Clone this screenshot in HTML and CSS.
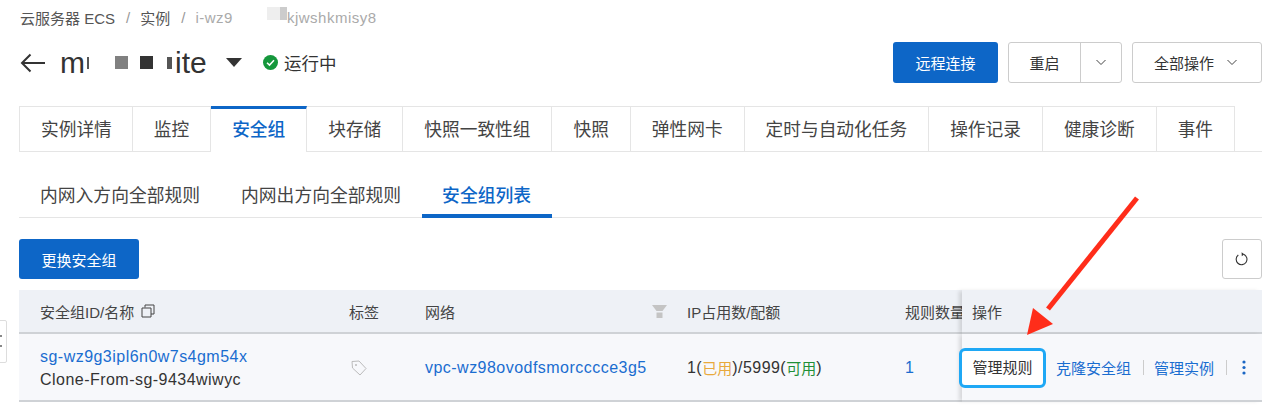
FILE: index.html
```html
<!DOCTYPE html>
<html lang="zh-CN">
<head>
    <meta charset="UTF-8">
    <title>安全组</title>
    <link rel="stylesheet" href="styles.css">
</head>
<body>
<div class="page">
    <div class="crumbs">
        <span>云服务器 ECS</span>
        <span class="crumb_sep">/</span>
        <span>实例</span>
        <span class="crumb_sep">/</span>
        <span class="crumb_last">i-wz9</span>
        <span class="crumb_blur"><i></i><i class="crumb_square"></i></span>
        <span class="crumb_last">kjwshkmisy8</span>
    </div>

    <div class="head">
        <svg class="back" width="26" height="20" viewBox="0 0 26 20"><path d="M25 10H2M10.500 1.500 2 10l8.500 8.500" fill="none" stroke="#333" stroke-width="2"/></svg>
        <div class="name">
            <span>m</span>
            <i class="name_sliver"></i>
            <i class="name_square name_gray"></i>
            <i class="name_square name_dark"></i>
            <i class="name_sliver name_sliver2"></i>
            <span class="name_tail">ite</span>
        </div>
        <svg class="caret" width="16" height="9" viewBox="0 0 16 9"><path d="M0 0h16L8 9z" fill="#333"/></svg>
        <svg class="ok" width="15" height="15" viewBox="0 0 15 15"><circle cx="7.500" cy="7.500" r="7.500" fill="#15973c"/><path d="M4 7.700l2.500 2.400L11 5.300" fill="none" stroke="#fff" stroke-width="1.500"/></svg>
        <span class="state">运行中</span>
        <div class="head_btns">
            <a class="btn btn_main">远程连接</a>
            <div class="btn_group">
                <a class="btn_part btn_restart">重启</a>
                <a class="btn_part btn_more"><svg width="12" height="7" viewBox="0 0 12 7"><path d="M1.500 1 6 5.500 10.500 1" fill="none" stroke="#444" stroke-width="1"/></svg></a>
            </div>
            <a class="btn btn_all">全部操作 <svg width="12" height="7" viewBox="0 0 12 7"><path d="M1.500 1 6 5.500 10.500 1" fill="none" stroke="#444" stroke-width="1"/></svg></a>
        </div>
    </div>

    <div class="tabs">
        <a class="tab">实例详情</a>
        <a class="tab">监控</a>
        <a class="tab tab_active">安全组</a>
        <a class="tab">块存储</a>
        <a class="tab">快照一致性组</a>
        <a class="tab">快照</a>
        <a class="tab">弹性网卡</a>
        <a class="tab">定时与自动化任务</a>
        <a class="tab">操作记录</a>
        <a class="tab">健康诊断</a>
        <a class="tab">事件</a>
    </div>

    <div class="subtabs">
        <a class="subtab">内网入方向全部规则</a>
        <a class="subtab">内网出方向全部规则</a>
        <a class="subtab subtab_active">安全组列表</a>
    </div>

    <div class="tools">
        <a class="btn btn_change">更换安全组</a>
        <a class="btn_refresh"><svg width="14" height="14" viewBox="0 0 14 14"><path d="M8.600 2.300A5.400 5.400 0 1 1 3.300 3" fill="none" stroke="#333" stroke-width="1.100"/><path d="M6.600 .3 9.200 2.300 6.800 4.300z" fill="#333"/></svg></a>
    </div>

    <div class="table">
        <div class="cell th c_first">安全组ID/名称
            <svg class="copy" width="14" height="14" viewBox="0 0 14 14"><path d="M4 3.500V1h9v9h-3M1 4h9v9H1z" fill="none" stroke="#444" stroke-width="1"/></svg>
        </div>
        <div class="cell th">标签</div>
        <div class="cell th c_net">网络
            <svg width="15" height="13" viewBox="0 0 15 13"><path d="M0 0h15l-4.500 6H4.500z" fill="#c4c4c4"/><path d="M4.500 7.500h6V13h-6z" fill="#c4c4c4"/></svg>
        </div>
        <div class="cell th">IP占用数/配额</div>
        <div class="cell th c_clip">规则数量</div>
        <div class="cell th c_ops">操作</div>

        <div class="cell td c_first c_two">
            <a class="link">sg-wz9g3ipl6n0w7s4gm54x</a>
            <span>Clone-From-sg-9434wiwyc</span>
        </div>
        <div class="cell td">
            <svg class="tag" width="16" height="16" viewBox="0 0 16 16"><path d="M1 1.500 8 1l7 7.500-6 6.500-7.500-7z" fill="none" stroke="#bbb" stroke-width="1"/><circle cx="5" cy="5" r="1" fill="#bbb"/></svg>
        </div>
        <div class="cell td"><a class="link">vpc-wz98ovodfsmorcccce3g5</a></div>
        <div class="cell td">1(<span class="used">已用</span>)/5999(<span class="free">可用</span>)</div>
        <div class="cell td"><a class="link">1</a></div>
        <div class="cell td c_ops c_actions">
            <a class="mark">管理规则</a>
            <a class="link">克隆安全组</a>
            <i class="sep"></i>
            <a class="link">管理实例</a>
            <i class="sep"></i>
            <svg class="dots" width="4" height="15" viewBox="0 0 4 15"><circle cx="2" cy="2" r="1.600" fill="#1a66c4"/><circle cx="2" cy="7.500" r="1.600" fill="#1a66c4"/><circle cx="2" cy="13" r="1.600" fill="#1a66c4"/></svg>
        </div>
    </div>
</div>

<!-- overlays -->
<div class="handle"></div>
<svg class="pointer" width="130" height="150" viewBox="0 0 130 150">
    <path d="M118 3 29 114" stroke="#ff2d1a" stroke-width="5" fill="none"/>
    <path d="M8 140 14 113 34 129z" fill="#ff2d1a"/>
</svg>
</body>
</html>
```

FILE: styles.css
```css
* {
    box-sizing: border-box;
    margin: 0;
    padding: 0;
}
body {
    background: #fff;
    color: #333;
    font-family: 'Liberation Sans', 'Noto Sans CJK SC', sans-serif;
    overflow: hidden;
    position: relative;
    height: 416px;
}
a {
    cursor: pointer;
}
.page {
    padding: 7px 18px 0 19px;
}

.crumbs {
    display: flex;
    align-items: center;
    height: 20px;
    padding-left: 1px;
    font-size: 15px;
    color: #555;
}
.crumb_sep {
    margin: 0 10px 0 11px;
    color: #999;
}
.crumb_last {
    color: #aaa;
    letter-spacing: .5px;
}
.crumb_blur {
    width: 54px;
    height: 20px;
    display: flex;
    justify-content: flex-end;
    align-items: flex-start;
}
.crumb_blur i {
    width: 13px;
    height: 13px;
    background: #eee;
}
.crumb_blur .crumb_square {
    width: 7px;
    background: #ccc;
}

.head {
    display: flex;
    align-items: center;
    height: 41px;
    margin-top: 15px;
}
.back {
    margin-left: 1px;
    margin-right: 14px;
}
.name {
    display: flex;
    align-items: center;
    width: 149px;
    font-size: 30px;
    line-height: 41px;
    color: #333;
}
.name_sliver {
    width: 2px;
    height: 12px;
    margin-left: 2px;
    background: #555;
}
.name_sliver2 {
    width: 5px;
    margin-left: 14px;
}
.name_tail {
    margin-left: 3px;
}
.name_square {
    width: 13px;
    height: 13px;
}
.name_gray {
    margin-left: 26px;
    background: #808080;
}
.name_dark {
    margin-left: 12px;
    background: #333;
}
.caret {
    margin-left: 17px;
}
.ok {
    margin-left: 21px;
}
.state {
    margin-left: 6px;
    font-size: 17.500px;
}
.head_btns {
    display: flex;
    gap: 10px;
    margin-left: auto;
}
.btn {
    display: flex;
    align-items: center;
    justify-content: center;
    height: 41px;
    font-size: 15px;
    border-radius: 3px;
}
.btn_main {
    width: 105px;
    background: #0d66c7;
    color: #fff;
}
.btn_group {
    display: flex;
    width: 114px;
    height: 41px;
    border: 1px solid #ccc;
    border-radius: 3px;
}
.btn_part {
    display: flex;
    align-items: center;
    justify-content: center;
    font-size: 15px;
}
.btn_restart {
    width: 72px;
    border-right: 1px solid #ccc;
}
.btn_more {
    flex: 1;
}
.btn_all {
    gap: 12px;
    width: 130px;
    padding-right: 2px;
    border: 1px solid #ccc;
}

.tabs {
    display: flex;
    height: 46px;
    margin-top: 23px;
    border-bottom: 1px solid #e5e5e5;
}
.tab {
    display: flex;
    align-items: center;
    justify-content: center;
    height: 46px;
    padding: 0 21px 2px;
    font-size: 17.700px;
    background: #fff;
    border: 1px solid #e5e5e5;
    border-left: 0;
    color: #444;
}
.tab:first-child {
    border-left: 1px solid #e5e5e5;
    padding-right: 20px;
}
.tab_active {
    border-top: 3px solid #0d66c7;
    border-bottom: 0;
    padding-bottom: 5px;
    color: #0d66c7;
    font-weight: 500;
}

.subtabs {
    display: flex;
    height: 44px;
    margin-top: 22px;
    padding-left: .5px;
    border-bottom: 1px solid #e5e5e5;
}
.subtab {
    height: 44px;
    padding: 0 20.500px;
    line-height: 44px;
    font-size: 17.800px;
    color: #444;
}
.subtab_active {
    color: #0d66c7;
    font-weight: 500;
    border-bottom: 4px solid #0d66c7;
}

.tools {
    display: flex;
    justify-content: space-between;
    margin-top: 21px;
}
.btn_change {
    width: 120px;
    height: 40px;
    background: #0d66c7;
    color: #fff;
}
.btn_refresh {
    display: flex;
    align-items: center;
    justify-content: center;
    width: 40px;
    height: 40px;
    border: 1px solid #ccc;
    border-radius: 3px;
}

.table {
    display: grid;
    grid-template-columns: 310px 76px 262px 218px 77px 300px;
    grid-template-rows: 44px 68px;
    margin-top: 11px;
    font-size: 15px;
}
.cell {
    display: flex;
    align-items: center;
    padding-left: 20px;
    border-bottom: 2px solid #cfd2d6;
    white-space: nowrap;
}
.th {
    background: #eef1f6;
    color: #444;
}
.td {
    padding-top: 1px;
    background: #f7f8fb;
    font-size: 16px;
    letter-spacing: .47px;
}
.c_first {
    padding-left: 21px;
}
.copy {
    margin-left: 7px;
}
.tag {
    margin-left: 2px;
}
.c_net {
    justify-content: space-between;
}
.c_clip {
    overflow: hidden;
    padding-right: 0;
}
.c_ops {
    padding-left: 10px;
    box-shadow: -4px 0 4px -1px rgba(0, 0, 0, .13);
    position: relative;
}
.c_two {
    flex-direction: column;
    align-items: flex-start;
    justify-content: center;
    gap: 4px;
    line-height: 19px;
}
.link {
    color: #1a6dd0;
}
.used,
.free {
    font-size: 15px;
    letter-spacing: 0;
}
.used {
    color: #e8a93c;
}
.free {
    color: #1f8f36;
}
.c_actions {
    padding-left: 0;
    font-size: 15px;
    letter-spacing: 0;
}
.mark {
    flex: none;
    width: 87px;
    height: 40px;
    margin-left: -3px;
    margin-right: 10px;
    line-height: 34px;
    text-align: center;
    background: #fff;
    border: 3px solid #1fa8f5;
    border-radius: 6px;
}
.sep {
    width: 1px;
    height: 15px;
    margin: 0 10px 0 12px;
    background: #ccc;
}
.dots {
    margin-left: 5px;
}

.handle {
    position: absolute;
    left: -2px;
    top: 320px;
    width: 9px;
    height: 43px;
    background: #fff;
    border: 1px solid #ddd;
    border-radius: 2px;
}
.handle::before {
    content: "";
    position: absolute;
    left: 1px;
    top: 14px;
    width: 2px;
    height: 2px;
    background: #888;
    box-shadow: 0 10px 0 #888;
}
.pointer {
    position: absolute;
    left: 1019px;
    top: 195px;
}
```
